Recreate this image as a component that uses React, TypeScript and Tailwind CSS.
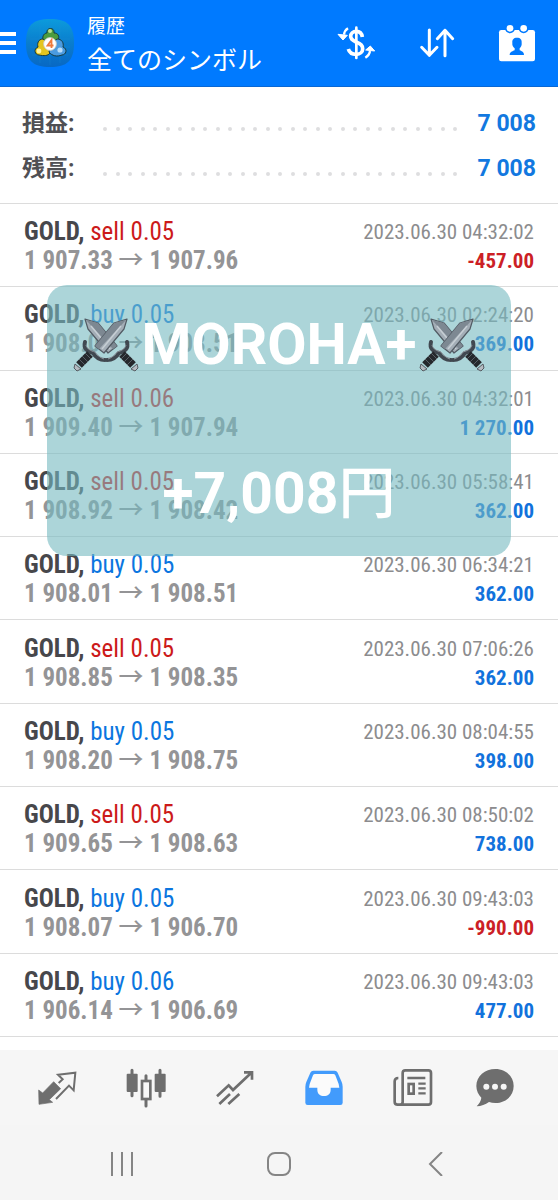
import type { ReactNode } from 'react'

type Deal = {
  side: 'buy' | 'sell'
  volume: string
  open: string
  close: string
  time: string
  profit: string
}

const DEALS: Deal[] = [
  { side: 'sell', volume: '0.05', open: '1 907.33', close: '1 907.96', time: '2023.06.30 04:32:02', profit: '-457.00' },
  { side: 'buy', volume: '0.05', open: '1 908.00', close: '1 908.51', time: '2023.06.30 02:24:20', profit: '369.00' },
  { side: 'sell', volume: '0.06', open: '1 909.40', close: '1 907.94', time: '2023.06.30 04:32:01', profit: '1 270.00' },
  { side: 'sell', volume: '0.05', open: '1 908.92', close: '1 908.42', time: '2023.06.30 05:58:41', profit: '362.00' },
  { side: 'buy', volume: '0.05', open: '1 908.01', close: '1 908.51', time: '2023.06.30 06:34:21', profit: '362.00' },
  { side: 'sell', volume: '0.05', open: '1 908.85', close: '1 908.35', time: '2023.06.30 07:06:26', profit: '362.00' },
  { side: 'buy', volume: '0.05', open: '1 908.20', close: '1 908.75', time: '2023.06.30 08:04:55', profit: '398.00' },
  { side: 'sell', volume: '0.05', open: '1 909.65', close: '1 908.63', time: '2023.06.30 08:50:02', profit: '738.00' },
  { side: 'buy', volume: '0.05', open: '1 908.07', close: '1 906.70', time: '2023.06.30 09:43:03', profit: '-990.00' },
  { side: 'buy', volume: '0.06', open: '1 906.14', close: '1 906.69', time: '2023.06.30 09:43:03', profit: '477.00' },
]

const DOTS = Array.from({ length: 29 }, (_, i) => i)

function AppLogo() {
  return (
    <svg className="h-12 w-12 shrink-0" viewBox="0 0 48 48" aria-hidden="true">
      <defs>
        <linearGradient id="logo-bg" x1="0" y1="0" x2="0" y2="1">
          <stop offset="0" stopColor="#0c9bdc" />
          <stop offset="0.5" stopColor="#0a7dcd" />
          <stop offset="1" stopColor="#0868c4" />
        </linearGradient>
      </defs>
      <path d="M24 0C41 0 48 6 48 24S41 48 24 48 0 42 0 24 7 0 24 0Z" fill="url(#logo-bg)" />
      <path d="M6 12H42M4 20H44M4 28H44M6 36H42M14 4V44M24 2V46M34 4V44" stroke="#1d92d6" strokeWidth="0.5" opacity="0.5" />
      <g stroke="#173a3c" strokeWidth="1">
        <path d="M17 21c-1-5 2-7 4-7-1-6 8-6 7 0 4 0 6 3 4 8-3 3-12 4-15-1Z" fill="#4c9b3d" />
        <path d="M17 20c-5 0-6 5-5 8-5 2-3 8 1 8 5 1 9 1 11-2l-1-9Z" fill="#e4c51f" />
        <path d="M31 20c5 0 7 4 6 8 5 2 3 8-1 8-5 2-10 1-13-3l2-8Z" fill="#4b9be0" />
      </g>
      <circle cx="24" cy="12" r="2" fill="#b9dd8d" />
      <circle cx="13" cy="32" r="2.4" fill="#fff3a0" />
      <circle cx="34" cy="31" r="2.6" fill="#b8dcf8" />
      <circle cx="24" cy="25" r="6.4" fill="#fff" stroke="#c9c9c0" strokeWidth="0.8" />
      <path d="M25.5 29V21L21.5 26.5H27.5" fill="none" stroke="#ee7a3c" strokeWidth="1.8" />
    </svg>
  )
}

function DollarIcon() {
  return (
    <svg className="h-[34px] w-10" viewBox="48 78 120 102" fill="none" stroke="#fff" aria-hidden="true">
      <path d="M109 83V174" strokeWidth="8" strokeLinecap="round" />
      <path d="M127 111C125 98 117 94 109 94C99 94 92 101 92 109C92 120 101 123 110 127C121 131 128 136 128 146C128 156 120 163 109 163C96 163 88 158 85 147" strokeWidth="11" />
      <path d="M84 85C76 90 73 96 72 104" strokeWidth="7" />
      <path d="M54 103L82 106L69 120Z" fill="#fff" strokeWidth="3" strokeLinejoin="round" />
      <path d="M136 173C144 168 149 161 150 153" strokeWidth="7" />
      <path d="M137 150L164 153L151 138Z" fill="#fff" strokeWidth="3" strokeLinejoin="round" />
    </svg>
  )
}

function SortIcon() {
  return (
    <svg className="h-8 w-9" viewBox="297 81 108 96" fill="none" stroke="#fff" strokeWidth="9" strokeLinecap="round" strokeLinejoin="round" aria-hidden="true">
      <path d="M328 90V166M305 142L328 166L351 142M375 167V91M352 116L375 91L398 116" />
    </svg>
  )
}

function CalendarIcon() {
  return (
    <svg className="h-[38px] w-[38px]" viewBox="534 69 114 114" aria-hidden="true">
      <path d="M544 87H638Q645 87 645 94V174Q645 181 638 181H544Q537 181 537 174V94Q537 87 544 87Z" fill="#fff" />
      <circle cx="570" cy="82" r="15" fill="#007aff" />
      <circle cx="611" cy="82" r="15" fill="#007aff" />
      <circle cx="570" cy="82" r="10" fill="#fff" />
      <circle cx="611" cy="82" r="10" fill="#fff" />
      <path d="M591 110C601 110 606 116 605 125C606 132 603 138 599 142V148C606 151 612 153 612 162H569C569 153 577 151 584 148V142C579 138 576 132 577 125C576 116 581 110 591 110Z" fill="#007aff" />
    </svg>
  )
}

function SwordsIcon() {
  return (
    <svg className="h-[54px] w-[66px] shrink-0" viewBox="0 0 66 54" aria-hidden="true">
      <defs>
        <g id="sword">
          <path d="M54 1L51 11L31 35L22 28L41 5Z" fill="#a3adb6" stroke="#525b64" strokeWidth="1.2" strokeLinejoin="round" />
          <path d="M53 2L26 31L22 28L41 5Z" fill="#7d8892" />
          <path d="M48 8L29 31" stroke="#c6ced4" strokeWidth="1.5" />
          <path d="M12 24C10 31 15 34 20 35C23 40 27 42 32 42" fill="none" stroke="#414850" strokeWidth="4" strokeLinecap="round" />
          <path d="M13 27C14 31 18 33 22 34C25 38 28 40 31 41" fill="none" stroke="#8d959d" strokeWidth="1" />
          <path d="M17 36L6 47" stroke="#25282c" strokeWidth="8" />
          <path d="M12 35L18 41M9 38L15 44M6 41L12 47" stroke="#585f66" strokeWidth="1" />
          <path d="M2 46L8 51L4 53L1 50Z" fill="#b5bbc1" stroke="#555b61" strokeWidth="1" />
        </g>
      </defs>
      <g transform="translate(66 0) scale(-1 1)">
        <use href="#sword" />
      </g>
      <use href="#sword" />
    </svg>
  )
}

function SummaryRow({ label, value }: { label: string; value: string }) {
  return (
    <div className="flex h-[45px] items-center">
      <dt className="w-[81px] text-[23px] font-bold text-[#505054]">{label}</dt>
      <dd className="flex flex-1 items-center gap-5">
        <span className="flex flex-1 justify-between pt-2" aria-hidden="true">
          {DOTS.map((i) => (
            <span key={i} className="h-1 w-1 rounded-full bg-[#dedee0]" />
          ))}
        </span>
        <span className="text-[23px] font-bold text-[#1278e0]">{value}</span>
      </dd>
    </div>
  )
}

function DealRow({ deal }: { deal: Deal }) {
  const isLoss = deal.profit.startsWith('-')
  return (
    <li className="flex flex-1 items-center justify-between border-b border-[#dcdcdc] px-6 pt-0.5 leading-[29px] whitespace-nowrap">
      <div className="text-[25px]">
        <p>
          <span className="font-bold text-[#47474b]">GOLD,</span>{' '}
          <span className={deal.side === 'buy' ? 'text-[#0b76e0]' : 'text-[#cc1a1a]'}>
            {deal.side} {deal.volume}
          </span>
        </p>
        <p className="font-bold text-[#949496]">
          {deal.open} <span className="font-['Noto_Sans_CJK_JP',sans-serif] leading-none font-medium">→</span> {deal.close}
        </p>
      </div>
      <div className="pt-0.5 text-right text-[21px]">
        <p className="text-[#8c8c8e]">{deal.time}</p>
        <p className={`font-bold ${isLoss ? 'text-[#cc1f26]' : 'text-[#1272dc]'}`}>{deal.profit}</p>
      </div>
    </li>
  )
}

function TabButton({ label, children }: { label: string; children: ReactNode }) {
  return (
    <button aria-label={label} className="flex items-center justify-center" type="button">
      {children}
    </button>
  )
}

function TabBar() {
  return (
    <nav className="grid h-[75px] grid-cols-6 bg-[#f6f6f6] px-3">
      <TabButton label="気配値">
        <svg className="h-10 w-10" viewBox="110 111 120 120" aria-hidden="true">
          <path d="M115 177L127 186L160 152L181 173L147 206L157 214L116 220Z" fill="#6e6e6e" stroke="#6e6e6e" strokeWidth="2" strokeLinejoin="round" />
          <path d="M175 156L187 145L173 131L225 125L220 178L206 164L167 204" fill="none" stroke="#6e6e6e" strokeWidth="6" />
        </svg>
      </TabButton>
      <TabButton label="チャート">
        <svg className="h-10 w-10" viewBox="376 111 120 120" fill="none" stroke="#6e6e6e" aria-hidden="true">
          <path d="M394 118V194M478 118V196M436 134V148M436 206V225" strokeWidth="9" strokeLinecap="round" />
          <rect x="378" y="128" width="33" height="55" rx="3" fill="#6e6e6e" stroke="none" />
          <rect x="462" y="128" width="33" height="55" rx="3" fill="#6e6e6e" stroke="none" />
          <rect x="424" y="150" width="25" height="54" strokeWidth="8" />
        </svg>
      </TabButton>
      <TabButton label="トレード">
        <svg className="h-10 w-10" viewBox="644 111 120 120" fill="none" stroke="#6e6e6e" strokeWidth="8" aria-hidden="true">
          <path d="M650 196L685 163L698 177L753 125M731 124H755V146" />
          <path d="M657 219L689 189M684 219L717 189" />
        </svg>
      </TabButton>
      <TabButton label="履歴">
        <svg className="h-10 w-10" viewBox="71 111 120 120" aria-hidden="true">
          <path d="M99 119H163Q169 119 172 125L184 153Q187 160 187 168V215Q187 222 180 222H82Q75 222 75 215V168Q75 160 78 153L90 125Q93 119 99 119Z" fill="#429bfc" />
          <path d="M104 129H159Q163 129 165 133L175 159L177 170H151V176C151 189 142 195 131 195C120 195 111 189 111 176V170H86L88 159L98 133Q100 129 104 129Z" fill="#fbfbfb" />
        </svg>
      </TabButton>
      <TabButton label="ニュース">
        <svg className="h-10 w-10" viewBox="341 111 120 120" fill="none" stroke="#6e6e6e" strokeWidth="8" aria-hidden="true">
          <path d="M357 141Q346 141 346 151V212Q346 221 355 221H447Q455 221 455 213V126Q455 118 447 118H378Q370 118 370 126V213Q370 221 362 221" />
          <path d="M384 141H438M417 158H439M417 172H439M417 187H439" strokeWidth="7" />
          <rect x="388" y="159" width="15" height="29" />
        </svg>
      </TabButton>
      <TabButton label="メッセージ">
        <svg className="h-10 w-[52px]" viewBox="588 111 156 120" aria-hidden="true">
          <path d="M646 114C677 114 701 136 701 165C701 194 677 216 646 216C639 216 633 215 627 213C616 221 604 225 590 226C598 218 603 209 604 200C595 191 589 179 589 165C589 136 615 114 646 114Z" fill="#6e6e6e" />
          <circle cx="619" cy="167" r="9" fill="#f6f6f6" />
          <circle cx="645" cy="167" r="9" fill="#f6f6f6" />
          <circle cx="671" cy="167" r="9" fill="#f6f6f6" />
        </svg>
      </TabButton>
    </nav>
  )
}

function SystemBar() {
  return (
    <div className="grid h-[75px] grid-cols-3 bg-[#f5f5f5] px-11 pt-0.5">
      <TabButton label="最近">
        <svg className="h-6 w-6" viewBox="0 0 24 24" stroke="#858585" strokeWidth="2" aria-hidden="true">
          <path d="M2 0V24M12 0V24M22 0V24" />
        </svg>
      </TabButton>
      <TabButton label="ホーム">
        <svg className="h-6 w-6" viewBox="0 0 24 24" fill="none" stroke="#858585" strokeWidth="2" aria-hidden="true">
          <rect x="1" y="1" width="22" height="22" rx="7" />
        </svg>
      </TabButton>
      <TabButton label="戻る">
        <svg className="h-6 w-4" viewBox="0 0 16 24" fill="none" stroke="#858585" strokeWidth="2" aria-hidden="true">
          <path d="M14 0L2 12L14 24" />
        </svg>
      </TabButton>
    </div>
  )
}

export default function App() {
  return (
    <div className="flex min-h-screen flex-col bg-white font-[Roboto,'Noto_Sans_CJK_JP',sans-serif]">
      <header className="flex h-[87px] items-center border-b border-[#0a68d4] bg-[#007aff] pr-[22px] text-white">
        <button aria-label="メニュー" className="flex w-4 flex-col gap-[5px]" type="button">
          <span className="h-1 bg-white" />
          <span className="h-1 bg-white" />
          <span className="h-1 bg-white" />
        </button>
        <div className="ml-[10px]">
          <AppLogo />
        </div>
        <div className="ml-[13px] flex-1 pt-1 whitespace-nowrap">
          <p className="text-[19px] leading-[32px]">履歴</p>
          <h1 className="text-[25px] leading-[36px]">全てのシンボル</h1>
        </div>
        <div className="flex items-center gap-[43px]">
          <button aria-label="通貨" type="button">
            <DollarIcon />
          </button>
          <button aria-label="並べ替え" type="button">
            <SortIcon />
          </button>
          <button aria-label="期間" type="button">
            <CalendarIcon />
          </button>
        </div>
      </header>

      <dl className="border-b border-[#dcdcdc] px-[22px] pt-[15px] pb-[11px]">
        <SummaryRow label="損益:" value="7 008" />
        <SummaryRow label="残高:" value="7 008" />
      </dl>

      <main className="relative mb-[13px] flex flex-1 flex-col">
        <ul className="flex flex-1 flex-col font-['Roboto_Condensed','Liberation_Sans_Narrow',Roboto,sans-serif]">
          {DEALS.map((deal) => (
            <DealRow key={deal.open} deal={deal} />
          ))}
        </ul>

        {/* Result banner over the list */}
        <div className="absolute inset-x-[47px] top-[81px] flex h-[271px] flex-col items-center gap-[75px] rounded-[20px] bg-[#75b9c0]/60 pt-[23px] text-[57px] leading-[74px] font-bold whitespace-nowrap text-white">
          <p className="flex items-center gap-0.5">
            <SwordsIcon />
            <span>MOROHA+</span>
            <SwordsIcon />
          </p>
          <p>
            +7,008<span className="font-medium">円</span>
          </p>
        </div>
      </main>

      <TabBar />
      <SystemBar />
    </div>
  )
}
